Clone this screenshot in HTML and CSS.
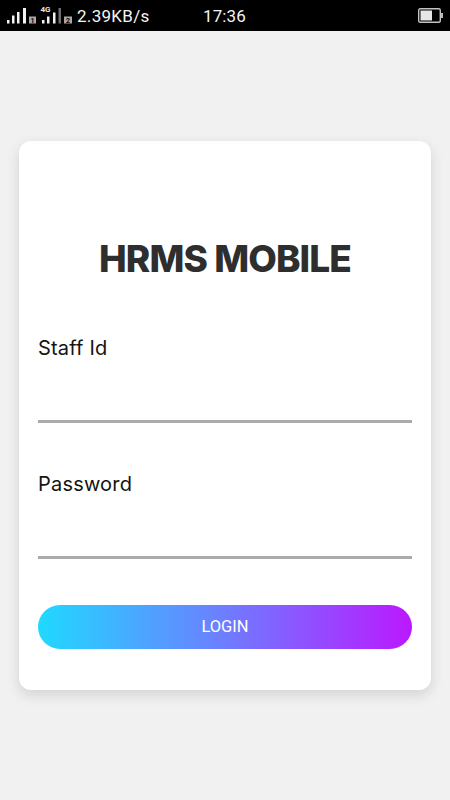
FILE: index.html
```html
<!DOCTYPE html>
<html lang="en">
<head>
<meta charset="utf-8">
<title>HRMS Mobile</title>
<link rel="stylesheet" href="styles.css">
</head>
<body>
<div class="status">
  <div class="status-left">
    <svg class="signal" width="73" height="31" viewBox="0 0 73 31">
      <g fill="#f2f2f2">
        <rect x="7" y="20" width="2.500" height="3.500"/>
        <rect x="12" y="15.500" width="2.500" height="8"/>
        <rect x="17" y="12" width="2.500" height="11.500"/>
        <rect x="23" y="8" width="3" height="15.500"/>
        <rect x="29" y="16.500" width="7" height="7" fill="#a8a8a8"/>
        <rect x="42" y="20" width="2.500" height="3.500"/>
        <rect x="47" y="16.500" width="2.500" height="7"/>
        <rect x="53" y="12.500" width="2.500" height="11"/>
        <rect x="58.500" y="8" width="2.500" height="15.500" fill="#6f6f6f"/>
        <rect x="64" y="16.500" width="8" height="7" fill="#a8a8a8"/>
      </g>
      <text class="sim" x="32.500" y="23">1</text>
      <text class="sim" x="68" y="23">2</text>
      <text class="net" x="45.500" y="12">4G</text>
    </svg>
    <span class="speed">2.39KB/s</span>
  </div>
  <span class="time">17:36</span>
  <svg class="battery" width="25" height="16" viewBox="0 0 25 16">
    <rect x="0.700" y="0.700" width="21.600" height="13.600" rx="1.500" fill="none" stroke="#c4c4c4" stroke-width="1.400"/>
    <rect x="2.500" y="2.500" width="11.500" height="10" fill="#e6e6e6"/>
    <rect x="23" y="5" width="2" height="5" fill="#bbb"/>
  </svg>
</div>
<main class="page">
  <form class="card">
    <h1 class="title">HRMS MOBILE</h1>
    <div class="field">
      <label class="label">Staff Id</label>
      <div class="line"></div>
    </div>
    <div class="field">
      <label class="label">Password</label>
      <div class="line"></div>
    </div>
    <button class="login" type="button">LOGIN</button>
  </form>
</main>
</body>
</html>
```
FILE: styles.css
```css
* { box-sizing: border-box; }
html, body { margin: 0; height: 100%; }
body {
  width: 450px;
  height: 800px;
  overflow: hidden;
  background: #f1f1f1;
  font-family: "Inter", "Liberation Sans", sans-serif;
}
.status {
  position: relative;
  height: 31px;
  background: #000;
  color: #f4f4f4;
  display: flex;
  align-items: center;
  justify-content: space-between;
  padding: 0 7px 0 0;
  font-family: "Roboto", sans-serif;
  font-size: 17px;
}
.status-left { display: flex; align-items: center; height: 31px; }
.signal { display: block; flex: none; }
.sim {
  font-family: "Roboto", sans-serif;
  font-size: 7px;
  font-weight: 700;
  fill: #000;
  text-anchor: middle;
}
.net {
  font-family: "Roboto", sans-serif;
  font-size: 8px;
  font-weight: 700;
  fill: #e8e8e8;
  text-anchor: middle;
}
.speed { margin-left: 4px; letter-spacing: 0.300px; }
.time { position: absolute; left: 203px; top: 6px; line-height: 20px; letter-spacing: 0.100px; }
.battery { display: block; }
.page { padding: 110px 19px 0; }
.card {
  height: 549px;
  background: #fff;
  border-radius: 12px;
  box-shadow: 0 5px 14px rgba(0, 0, 0, 0.13);
  padding: 96px 19px 0;
  display: flex;
  flex-direction: column;
}
.title {
  margin: 0 0 54px;
  text-align: center;
  font-size: 37px;
  line-height: 44px;
  font-weight: 800;
  color: #2e2e2e;
  letter-spacing: -0.900px;
}
.field { margin-bottom: 48px; }
.field:last-of-type { margin-bottom: 46px; }
.label {
  display: block;
  font-size: 20px;
  line-height: 26px;
  color: #141414;
  letter-spacing: 0.200px;
}
.line { height: 3px; margin-top: 59px; background: #ababab; }
.login {
  height: 44px;
  border: 0;
  border-radius: 22px;
  background: linear-gradient(90deg, #1fd9ff 0%, #6e7dff 50%, #bb18ff 100%);
  color: #fff;
  font-family: "Roboto", sans-serif;
  font-size: 16.500px;
  padding: 0 0 2px;
}
```
